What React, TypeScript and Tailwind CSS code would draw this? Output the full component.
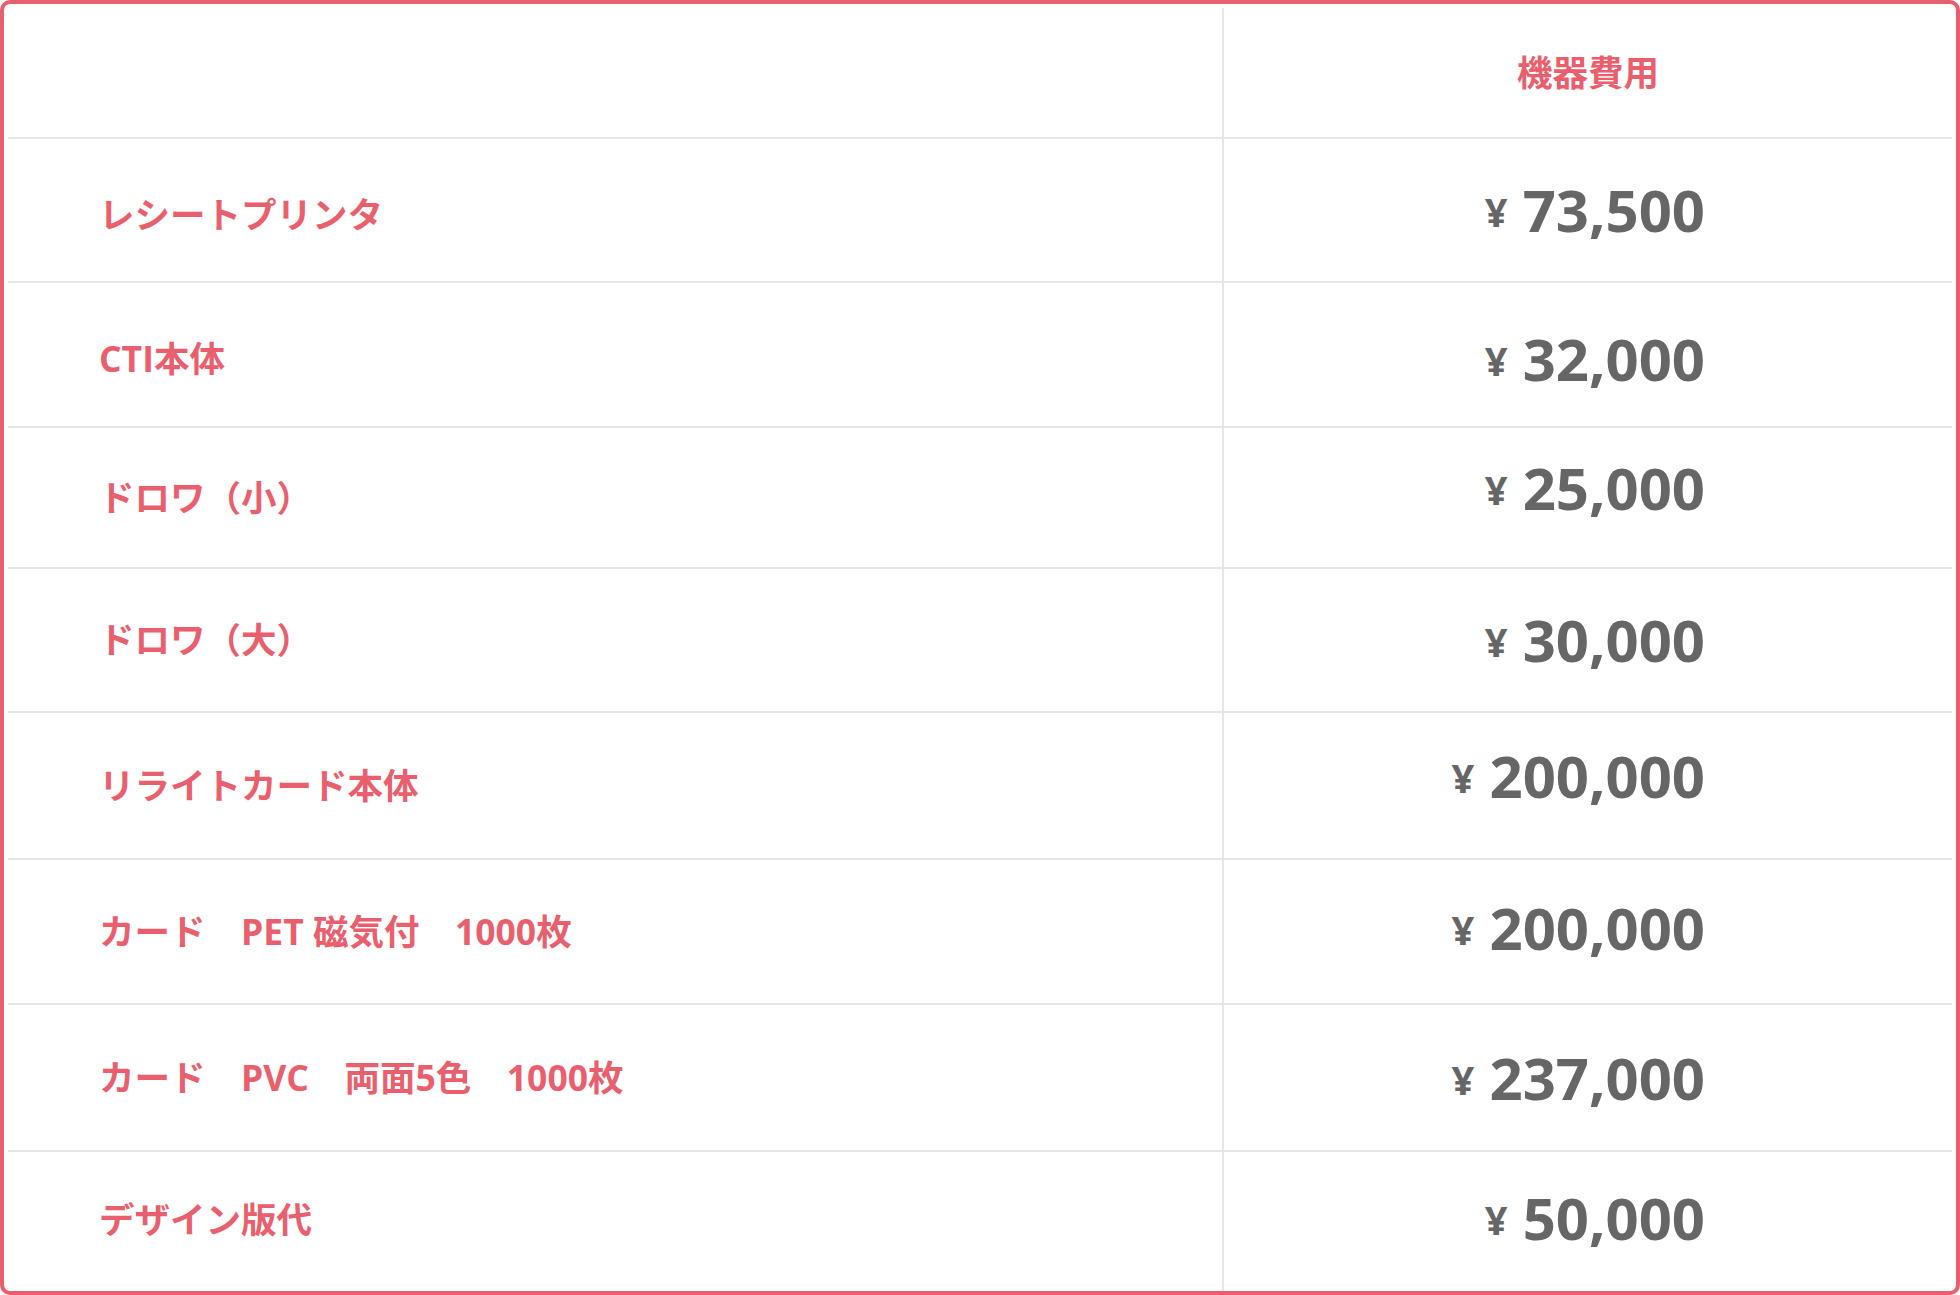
const rows = [
  { name: "レシートプリンタ", price: "73,500", h: "h-[144px]", nameShift: "pt-[10px]", priceShift: "" },
  { name: "CTI本体", price: "32,000", h: "h-[145px]", nameShift: "pt-[8px]", priceShift: "pt-[8px]" },
  { name: "ドロワ（小）", price: "25,000", h: "h-[141px]", nameShift: "", priceShift: "pb-[20px]" },
  { name: "ドロワ（大）", price: "30,000", h: "h-[144px]", nameShift: "", priceShift: "" },
  { name: "リライトカード本体", price: "200,000", h: "h-[147px]", nameShift: "", priceShift: "pb-[20px]" },
  { name: "カード　PET 磁気付　1000枚", price: "200,000", h: "h-[145px]", nameShift: "", priceShift: "pb-[8px]" },
  { name: "カード　PVC　両面5色　1000枚", price: "237,000", h: "h-[147px]", nameShift: "", priceShift: "" },
  { name: "デザイン版代", price: "50,000", h: "h-[139px]", nameShift: "pb-[4px]", priceShift: "pb-[8px]" },
];

export default function App() {
  return (
    <div className="w-[1960px] h-[1295px] bg-white font-['Open_Sans','Noto_Sans_CJK_JP',sans-serif]">
      <div className="h-full border-4 border-[#ea5f6d] rounded-[10px] px-1 pt-1 overflow-hidden">
        {/* header */}
        <div className="grid grid-cols-[1216px_1fr] h-[131px] border-b-2 border-[#e6e6e6]">
          <div className="border-r-2 border-[#e6e6e6]" />
          <div className="flex items-center justify-center text-[35.5px] font-bold text-[#ea5f6d]">
            機器費用
          </div>
        </div>

        {rows.map((row, idx) => (
          <div
            key={idx}
            className={`grid grid-cols-[1216px_1fr] ${row.h} ${
              idx < rows.length - 1 ? "border-b-2 border-[#e6e6e6]" : ""
            }`}
          >
            <div
              className={`flex items-center pl-[91px] border-r-2 border-[#e6e6e6] text-[35.5px] font-bold text-[#ea5f6d] whitespace-pre ${row.nameShift}`}
            >
              {row.name}
            </div>
            <div
              className={`flex items-center justify-end pr-[247px] text-[58px] font-bold text-[#666666] leading-none ${row.priceShift}`}
            >
              <span className="text-[40px] pt-[4px]">¥</span>
              <span>&nbsp;{row.price}</span>
            </div>
          </div>
        ))}
      </div>
    </div>
  );
}
